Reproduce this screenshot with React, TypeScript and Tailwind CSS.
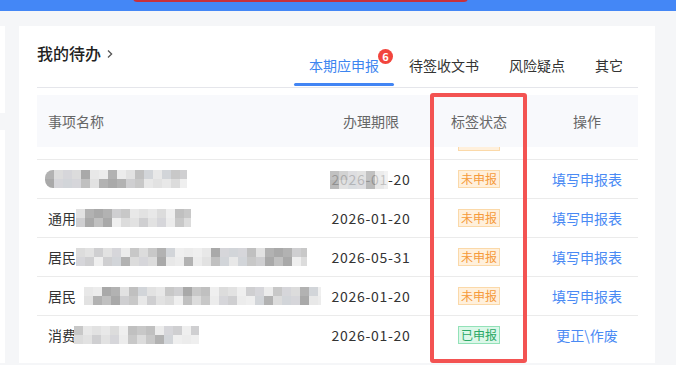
import type { ReactNode } from "react";

const grays = [
  "#dcdcdc", "#cfcfd1", "#c0c0c0", "#e8e8e8", "#b2b2b2", "#d6d6da",
  "#efefef", "#c8c8c8", "#e2e2e2", "#a9a9a9", "#d2d5d9", "#ececec",
];

// pixelated placeholder for the blurred-out item names
function Mosaic({ width, seed, className = "" }: { width: number; seed: number; className?: string }) {
  const n = Math.ceil(width / 9);
  const rows = [0, 1].map((r) =>
    Array.from({ length: n }, (_, i) => grays[(i * 7 + r * 5 + seed * 3 + ((i * i + seed) % 5)) % grays.length])
  );
  return (
    <span className={`inline-flex shrink-0 flex-col overflow-hidden ${className}`} style={{ width }}>
      {rows.map((row, r) => (
        <span key={r} className="flex h-[9px]">
          {row.map((c, i) => (
            <span key={i} className="h-full w-[9px] shrink-0" style={{ background: c }} />
          ))}
        </span>
      ))}
    </span>
  );
}

function Tag({ done, hidden }: { done?: boolean; hidden?: boolean }) {
  if (hidden) {
    // row scrolled under the header: only the bottom edge of the tag shows
    return <span className="h-[18px] w-[42px] border border-[#fbd9a9] bg-[#fff0dc]" />;
  }
  return done ? (
    <span className="flex h-[18px] items-center border border-[#93e2b8] bg-[#dcf7e9] px-[2px] text-[12px] leading-none text-[#2ba866]">
      已申报
    </span>
  ) : (
    <span className="flex h-[18px] items-center border border-[#fbd9a9] bg-[#fff0dc] px-[2px] text-[12px] leading-none text-[#f59a3b]">
      未申报
    </span>
  );
}

type Row = { name: ReactNode; date: ReactNode; done?: boolean; op: string };

const rows: Row[] = [
  { name: null, date: "", op: "" },
  {
    name: <Mosaic width={142} seed={1} className="-ml-[3px] rounded-l-[8px]" />,
    date: (
      <span className="relative">
        2026-01-20
        <Mosaic width={58} seed={4} className="absolute left-[-2px] top-[2px] opacity-80" />
      </span>
    ),
    op: "填写申报表",
  },
  {
    name: (
      <>
        <span>通用</span>
        <Mosaic width={115} seed={2} />
      </>
    ),
    date: "2026-01-20",
    op: "填写申报表",
  },
  {
    name: (
      <>
        <span>居民</span>
        <Mosaic width={231} seed={3} />
      </>
    ),
    date: "2026-05-31",
    op: "填写申报表",
  },
  {
    name: (
      <>
        <span>居民</span>
        <Mosaic width={237} seed={5} className="ml-[8px]" />
      </>
    ),
    date: "2026-01-20",
    op: "填写申报表",
  },
  {
    name: (
      <>
        <span>消费</span>
        <Mosaic width={125} seed={6} className="-ml-[2px]" />
      </>
    ),
    date: "2026-01-20",
    done: true,
    op: "更正\\作废",
  },
];

const tabs = ["本期应申报", "待签收文书", "风险疑点", "其它"];

export default function App() {
  return (
    <div
      className="h-[365px] w-[676px] overflow-hidden bg-[#f5f6f8]"
      style={{ fontFamily: '"Noto Sans CJK SC", "Noto Sans", sans-serif' }}
    >
      {/* top bar */}
      <div className="relative h-[11px] bg-[#4487f6]">
        <div className="absolute left-[133px] top-[-30px] h-[32px] w-[335px] rounded-[4px] border-2 border-[#c9303b] bg-white" />
      </div>

      <div className="flex gap-[14px] pt-[15px]">
        {/* cut-off left panel */}
        <div className="flex w-[5px] flex-col gap-[17px]">
          <div className="h-[87px] bg-white" />
          <div className="h-[233px] bg-white" />
        </div>

        {/* main card */}
        <div className="relative w-[636px] bg-white px-[18px] pb-[9px] pt-[16px]">
          <div className="mr-[-1px] flex h-[46px] items-end justify-between border-b border-[#e5e6eb]">
            <div className="flex items-center self-start">
              <span className="text-[16px] font-medium leading-[22px] text-[#222]">我的待办</span>
              <svg className="ml-[6px] mt-[1px]" width="6" height="10" viewBox="0 0 6 10">
                <path d="M1 1.5 L4.6 5 L1 8.5" fill="none" stroke="#555" strokeWidth="1.3" />
              </svg>
            </div>
            <div className="flex">
              {tabs.map((t, i) => (
                <div key={t} className="relative px-[15px] pb-[12px]">
                  <span
                    className={`relative block text-[14px] leading-[20px] ${
                      i === 0 ? "text-[#3d85f0]" : "text-[#333]"
                    }`}
                  >
                    {t}
                    {i === 0 && (
                      <span className="absolute left-full top-[-6px] -ml-[1px] flex h-[15px] w-[15px] items-center justify-center rounded-full bg-[#f2453d] text-[11px] font-bold leading-none text-white">
                        6
                      </span>
                    )}
                  </span>
                  {i === 0 && (
                    <span className="absolute bottom-[1px] left-0 h-[3px] w-full rounded-full bg-[#4285f4]" />
                  )}
                </div>
              ))}
            </div>
          </div>

          {/* table */}
          <div className="mr-[-1px] mt-[7px]">
            <div className="relative z-10 flex h-[52px] items-center bg-[#f8f9fc] text-[14px] text-[#666]">
              <div className="flex-1 pl-[11px]">事项名称</div>
              <div className="w-[120px] text-center">办理期限</div>
              <div className="w-[96px] text-center">标签状态</div>
              <div className="w-[111px] pl-[9px] text-center">操作</div>
            </div>
            <div className="h-[207px] overflow-hidden">
              <div className="-mt-[26px]">
                {rows.map((r, i) => (
                  <div
                    key={i}
                    className="flex h-[39px] items-center border-b border-[#ebebeb] text-[14px] text-[#333]"
                  >
                    <div className="flex min-w-0 flex-1 items-center whitespace-nowrap pl-[11px]">{r.name}</div>
                    <div className="w-[120px] text-center tracking-[0.7px]">{r.date}</div>
                    <div className={`flex w-[96px] justify-center ${i === 0 ? "pt-[3px]" : ""}`}>
                      <Tag done={r.done} hidden={i === 0} />
                    </div>
                    <div className="w-[111px] pl-[9px] text-center text-[#4a8af4]">{r.op}</div>
                  </div>
                ))}
              </div>
            </div>
          </div>

          {/* red highlight around status column */}
          <div className="pointer-events-none absolute left-[411px] top-[67px] z-20 h-[270px] w-[97px] rounded-[3px] border-4 border-[#f35352]" />
        </div>
      </div>
    </div>
  );
}
